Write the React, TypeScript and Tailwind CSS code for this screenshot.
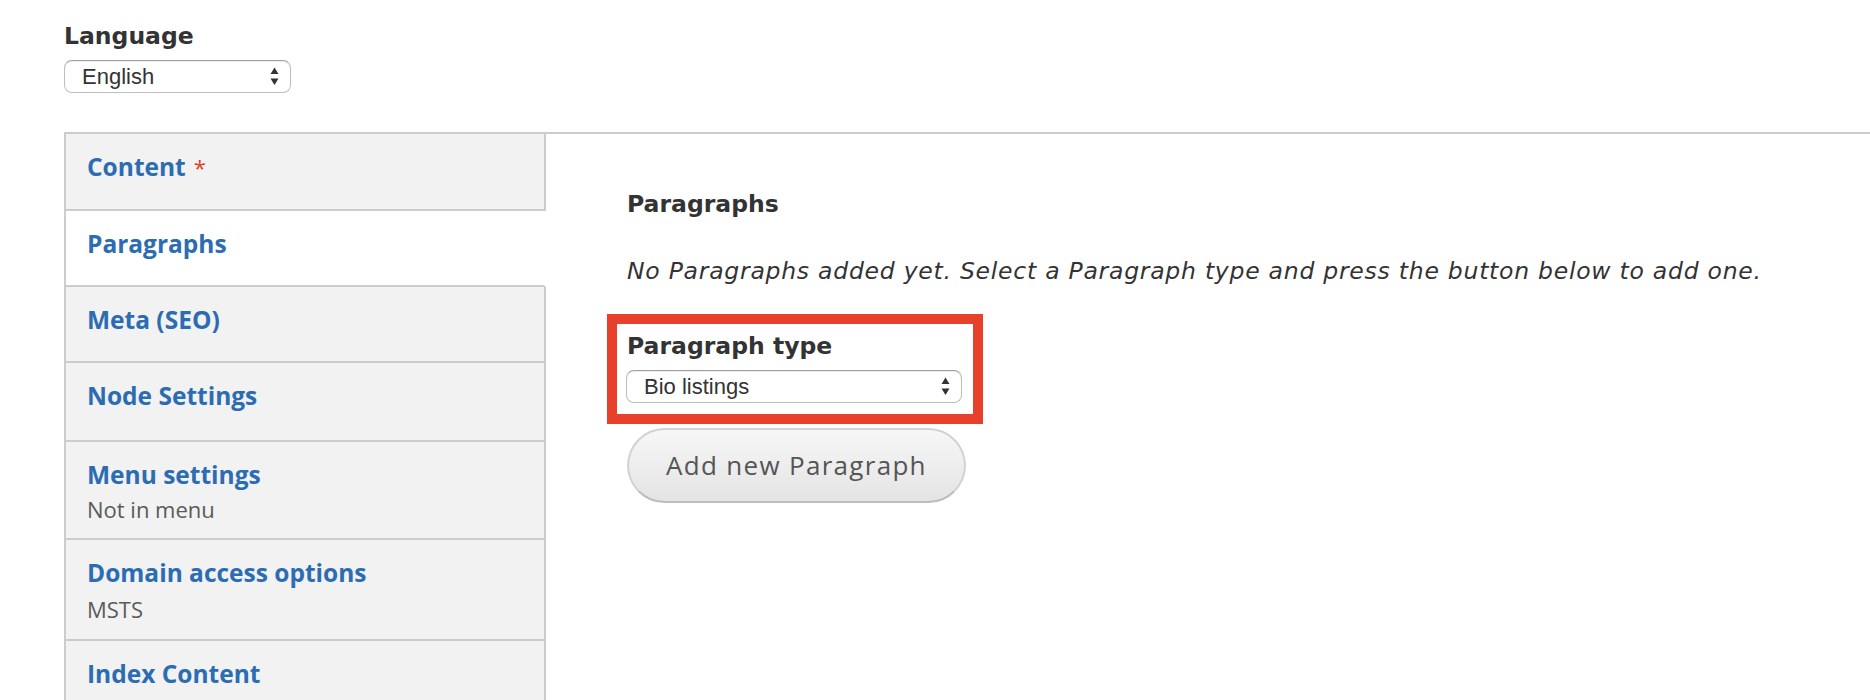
import React from 'react';

const tabs = [
    { id: 'content', title: 'Content', required: true, height: 'h-[77px]' },
    { id: 'paragraphs', title: 'Paragraphs', active: true, height: 'h-[76px]' },
    { id: 'meta', title: 'Meta (SEO)', height: 'h-[76px]' },
    { id: 'node', title: 'Node Settings', height: 'h-[79px]' },
    { id: 'menu', title: 'Menu settings', summary: 'Not in menu', gap: 'mt-[5px]', height: 'h-[98px]' },
    { id: 'domain', title: 'Domain access options', summary: 'MSTS', gap: 'mt-[7px]', height: 'h-[101px]' },
    { id: 'index', title: 'Index Content', height: 'h-[78px]' }
];

const SelectArrows: React.FC = () => (
    <svg width="9" height="19" viewBox="0 0 9 19" className="shrink-0">
        <path d="M4.5 0.5 L8.5 7 L0.5 7 Z" fill="#333" />
        <path d="M0.5 11.5 L8.5 11.5 L4.5 18 Z" fill="#333" />
    </svg>
);

const FakeSelect: React.FC<{ value: string; width: string }> = ({ value, width }) => (
    <div
        role="combobox"
        className={`${width} h-[33px] flex items-center justify-between pl-[17px] pr-[11px] bg-white rounded-[8px] border-[1.5px] border-[#bdbdbd] border-t-[#9f9f9f] shadow-[inset_0_1px_1px_rgba(0,0,0,0.08)]`}
    >
        <span className="font-['Liberation_Sans',Arial,sans-serif] text-[22px] leading-none text-[#333]">{value}</span>
        <SelectArrows />
    </div>
);

export default function App() {
    return (
        <div className="min-h-[700px] bg-white font-['Open_Sans',sans-serif] text-[#333] overflow-hidden">
            <div className="pl-[64px] pt-[21px]">
                <div className="font-['DejaVu_Sans',sans-serif] text-[23.5px] leading-[30px] font-bold">Language</div>
                <div className="mt-[9px]">
                    <FakeSelect value="English" width="w-[227px]" />
                </div>
            </div>

            <div className="ml-[64px] mt-[39px] flex border-t-2 border-[#cccccc]">
                <ul className="w-[482px] shrink-0 border-l-2 border-[#cccccc]">
                    {tabs.map((tab) => (
                        <li
                            key={tab.id}
                            className={`${tab.height} border-b-2 border-r-2 border-b-[#cccccc] pl-[21px] pt-[18px] ${
                                tab.active ? 'bg-white border-r-white' : 'bg-[#f2f2f2] border-r-[#cccccc]'
                            }`}
                        >
                            <div className="text-[24.5px] leading-[30px] font-bold text-[#2b6cb3]">
                                {tab.title}
                                {tab.required && (
                                    <span className="ml-[8px] text-[22px] font-normal text-[#e0402a]">*</span>
                                )}
                            </div>
                            {tab.summary && (
                                <div className={`${tab.gap} text-[22px] leading-[28px] text-[#5a5a5a]`}>{tab.summary}</div>
                            )}
                        </li>
                    ))}
                </ul>

                <div className="flex-1 pl-[81px] pt-[55px] font-['DejaVu_Sans',sans-serif]">
                    <h2 className="text-[23.5px] leading-[30px] font-bold">Paragraphs</h2>
                    <p className="mt-[37px] text-[23.5px] leading-[30px] italic tracking-[0.75px]">
                        No Paragraphs added yet. Select a Paragraph type and press the button below to add one.
                    </p>

                    <div className="mt-[28px] -ml-[20px] w-[376px] border-[10px] border-[#e8412b] pl-[9px] pr-[11px] pt-[7px] pb-[11px]">
                        <div className="pl-[1px] text-[23.5px] leading-[30px] font-bold">Paragraph type</div>
                        <div className="mt-[9px]">
                            <FakeSelect value="Bio listings" width="w-[336px]" />
                        </div>
                    </div>

                    <button className="mt-[4px] w-[339px] h-[75px] rounded-full border-2 border-[#d2d2d2] border-b-[#bdbdbd] bg-gradient-to-b from-[#f7f7f7] to-[#e4e4e4] font-['Open_Sans',sans-serif] text-[26px] tracking-[1.3px] text-[#555]">
                        Add new Paragraph
                    </button>
                </div>
            </div>
        </div>
    );
}
